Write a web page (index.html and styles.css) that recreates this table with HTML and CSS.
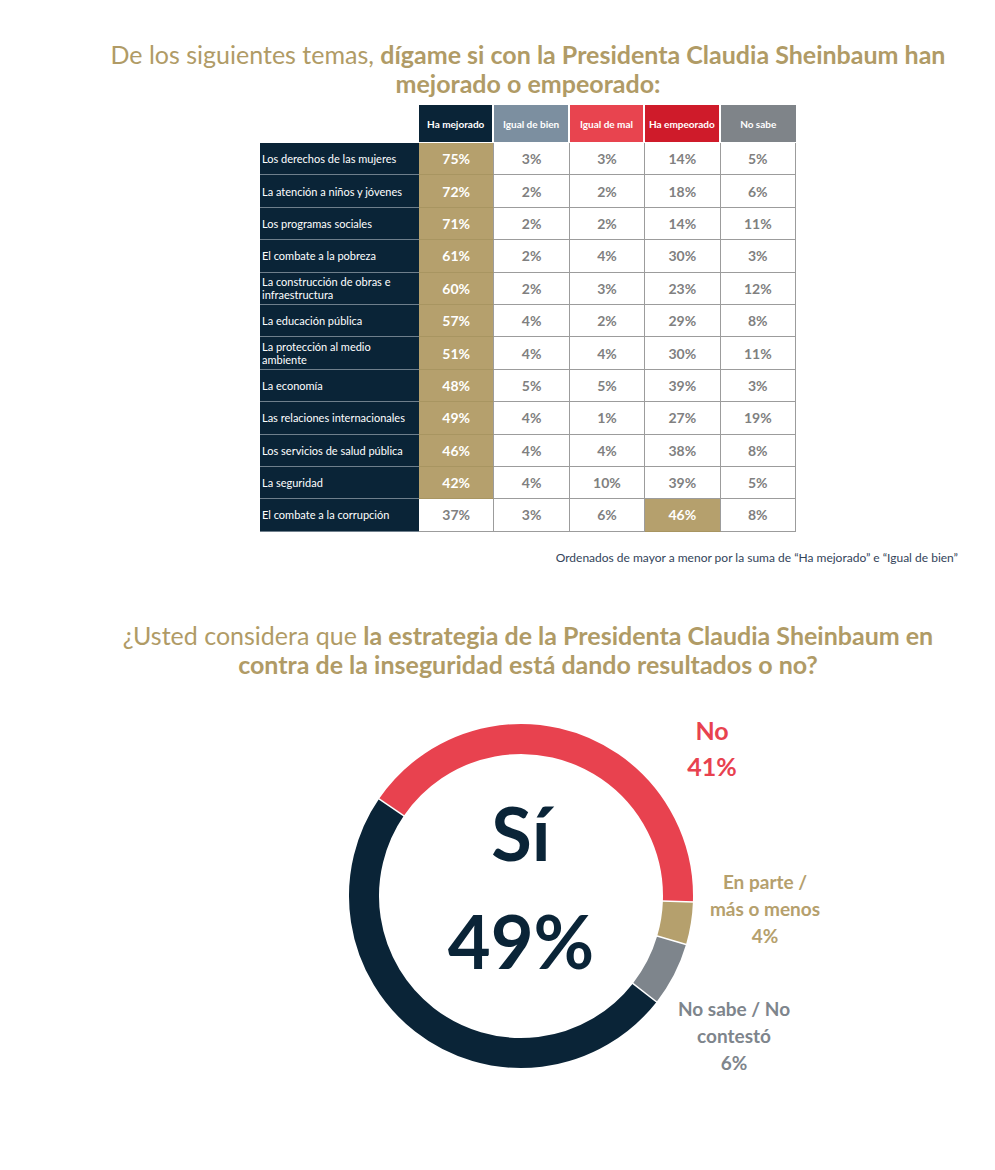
FILE: index.html
```html
<!DOCTYPE html>
<html lang="es">
<head>
<meta charset="utf-8">
<title>Encuesta</title>
<link rel="stylesheet" href="styles.css">
</head>
<body>
<div class="page">
  <h1 class="title title-1">De los siguientes temas, <b>dígame si con la Presidenta Claudia Sheinbaum han</b><br><b>mejorado o empeorado:</b></h1>

  <div class="grid">
    <div class="blank"></div>
    <div class="hd hd-mej">Ha mejorado</div>
    <div class="hd hd-ibien">Igual de bien</div>
    <div class="hd hd-imal">Igual de mal</div>
    <div class="hd hd-emp">Ha empeorado</div>
    <div class="hd hd-ns">No sabe</div>

    <div class="lbl">Los derechos de las mujeres</div><div class="v g">75%</div><div class="v">3%</div><div class="v">3%</div><div class="v">14%</div><div class="v">5%</div>
    <div class="lbl">La atención a niños y jóvenes</div><div class="v g">72%</div><div class="v">2%</div><div class="v">2%</div><div class="v">18%</div><div class="v">6%</div>
    <div class="lbl">Los programas sociales</div><div class="v g">71%</div><div class="v">2%</div><div class="v">2%</div><div class="v">14%</div><div class="v">11%</div>
    <div class="lbl">El combate a la pobreza</div><div class="v g">61%</div><div class="v">2%</div><div class="v">4%</div><div class="v">30%</div><div class="v">3%</div>
    <div class="lbl">La construcción de obras e infraestructura</div><div class="v g">60%</div><div class="v">2%</div><div class="v">3%</div><div class="v">23%</div><div class="v">12%</div>
    <div class="lbl">La educación pública</div><div class="v g">57%</div><div class="v">4%</div><div class="v">2%</div><div class="v">29%</div><div class="v">8%</div>
    <div class="lbl">La protección al medio ambiente</div><div class="v g">51%</div><div class="v">4%</div><div class="v">4%</div><div class="v">30%</div><div class="v">11%</div>
    <div class="lbl">La economía</div><div class="v g">48%</div><div class="v">5%</div><div class="v">5%</div><div class="v">39%</div><div class="v">3%</div>
    <div class="lbl">Las relaciones internacionales</div><div class="v g">49%</div><div class="v">4%</div><div class="v">1%</div><div class="v">27%</div><div class="v">19%</div>
    <div class="lbl">Los servicios de salud pública</div><div class="v g">46%</div><div class="v">4%</div><div class="v">4%</div><div class="v">38%</div><div class="v">8%</div>
    <div class="lbl">La seguridad</div><div class="v g">42%</div><div class="v">4%</div><div class="v">10%</div><div class="v">39%</div><div class="v">5%</div>
    <div class="lbl">El combate a la corrupción</div><div class="v">37%</div><div class="v">3%</div><div class="v">6%</div><div class="v g">46%</div><div class="v">8%</div>
  </div>

  <p class="note">Ordenados de mayor a menor por la suma de “Ha mejorado” e “Igual de bien”</p>

  <h2 class="title title-2">¿Usted considera que <b>la estrategia de la Presidenta Claudia Sheinbaum en</b><br><b>contra de la inseguridad está dando resultados o no?</b></h2>

  <div class="chart">
    <svg class="donut" width="362" height="394" viewBox="0 0 362 394">
      <g fill="none" stroke-width="30">
        <circle cx="181" cy="197" r="157" stroke="#e8424f" stroke-dasharray="404.45 986.46" transform="rotate(214.4 181 197)"/>
        <circle cx="181" cy="197" r="157" stroke="#b5a06d" stroke-dasharray="39.46 986.46" transform="rotate(2 181 197)"/>
        <circle cx="181" cy="197" r="157" stroke="#7e858c" stroke-dasharray="59.19 986.46" transform="rotate(16.4 181 197)"/>
        <circle cx="181" cy="197" r="157" stroke="#0a2437" stroke-dasharray="483.37 986.46" transform="rotate(38 181 197)"/>
      </g>
      <g stroke="#ffffff" stroke-width="1.5">
        <line x1="64.7" y1="117.3" x2="38.3" y2="99.3"/>
        <line x1="321.9" y1="201.9" x2="353.9" y2="203.0"/>
        <line x1="316.3" y1="236.8" x2="347.0" y2="245.8"/>
        <line x1="292.1" y1="283.8" x2="317.3" y2="303.5"/>
      </g>
    </svg>
    <div class="center"><span>Sí</span><span>49%</span></div>
    <div class="lab lab-no">No<br>41%</div>
    <div class="lab lab-parte">En parte /<br>más o menos<br>4%</div>
    <div class="lab lab-ns">No sabe / No<br>contestó<br>6%</div>
  </div>
</div>
</body>
</html>
```
FILE: styles.css
```css
html, body {
  margin: 0;
  padding: 0;
  background: #ffffff;
}

.page {
  width: 995px;
  font-family: Lato, "Open Sans", sans-serif;
  padding-top: 40px;
}

.title {
  margin: 0 0 0 78px;
  width: 900px;
  text-align: center;
  color: #b09b66;
  font-weight: 400;
  font-size: 25px;
  line-height: 29px;
}

.title b {
  font-weight: 700;
}

.title-2 {
  margin-top: 56px;
}

.grid {
  display: grid;
  grid-template-columns: 159px repeat(5, 75.4px);
  grid-template-rows: 38px repeat(12, 32.4px);
  margin: 7px 0 0 260px;
  width: 536px;
}

.blank {
  background: #ffffff;
}

.hd {
  display: flex;
  align-items: center;
  justify-content: center;
  color: #ffffff;
  font-size: 10px;
  font-weight: 700;
  margin-right: 2px;
  margin-bottom: 1px;
}

.hd-mej { background: #0a2437; }
.hd-ibien { background: #7c8fa0; }
.hd-imal { background: #e8444f; }
.hd-emp { background: #cf1b2a; }
.hd-ns { background: #7f8489; margin-right: 0; }

.lbl {
  background: #0a2437;
  color: #ffffff;
  font-size: 11px;
  line-height: 13px;
  display: flex;
  align-items: center;
  padding: 0 4px 0 2px;
  border-bottom: 1px solid #6f7f8c;
}

.v {
  display: flex;
  align-items: center;
  justify-content: center;
  color: #808080;
  font-weight: 700;
  font-size: 14px;
  border-right: 1px solid #9c9c9c;
  border-bottom: 1px solid #9c9c9c;
  background: #ffffff;
}

.v.g {
  background: #b5a06d;
  color: #ffffff;
  border-bottom-color: #a89561;
}

.note {
  margin: 18px 0 0 0;
  padding-right: 37px;
  text-align: right;
  font-size: 12px;
  line-height: 15px;
  color: #33445a;
}

.chart {
  position: relative;
  width: 480px;
  height: 400px;
  margin: 20px 0 0 340px;
}

.donut {
  position: absolute;
  left: 0;
  top: 0;
}

.center {
  position: absolute;
  left: 81px;
  top: 80px;
  width: 200px;
  display: flex;
  flex-direction: column;
  align-items: center;
  color: #0a2437;
  font-weight: 700;
  font-size: 74px;
  line-height: 108px;
}

.lab {
  position: absolute;
  text-align: center;
  font-weight: 700;
  white-space: nowrap;
  transform: translateX(-50%);
}

.lab-no {
  left: 372px;
  top: 13px;
  color: #e8424f;
  font-size: 25px;
  line-height: 36px;
}

.lab-parte {
  left: 425px;
  top: 169px;
  color: #b5a06d;
  font-size: 19px;
  line-height: 27px;
}

.lab-ns {
  left: 394px;
  top: 296px;
  color: #7e858c;
  font-size: 19px;
  line-height: 27px;
}
```
